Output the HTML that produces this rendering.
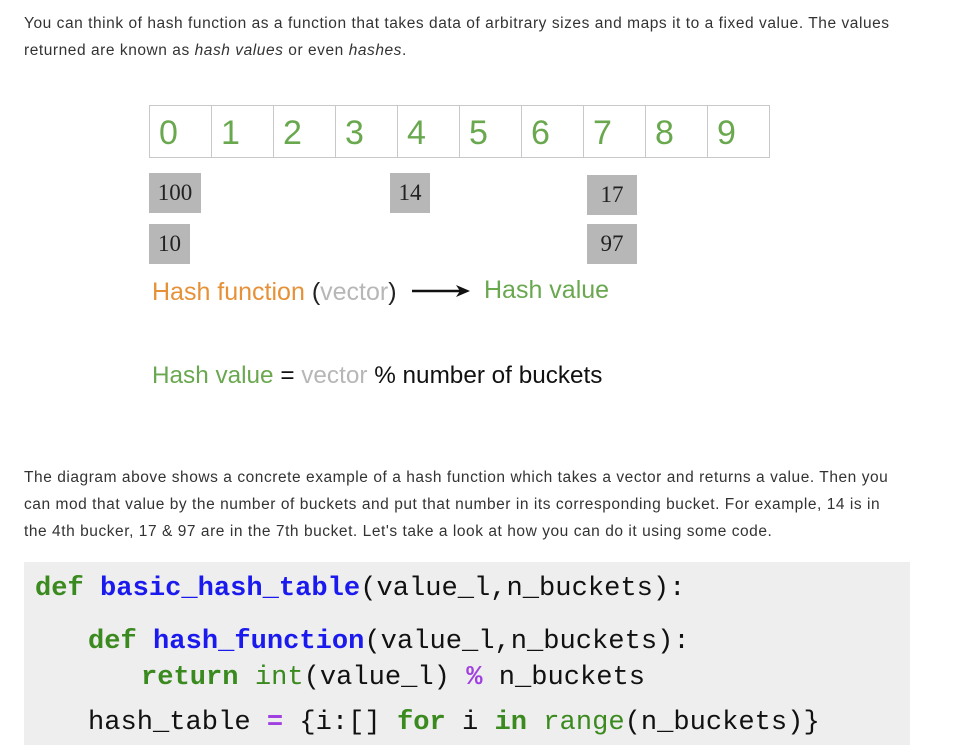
<!DOCTYPE html><html><head><style>
body{margin:0;width:973px;height:745px;overflow:hidden;background:#fff;font-family:"Liberation Sans",sans-serif;position:relative}
.p{position:absolute;left:24px;width:878px;font-size:15.5px;line-height:27px;color:#333;letter-spacing:0.55px}
.a{position:absolute;white-space:nowrap}
.cell{position:absolute;top:105px;width:62px;height:53px;border:1px solid #c8c8c8;border-right:none;color:#6aa84f;font-size:34px;line-height:54px;padding-left:9px;box-sizing:border-box;font-weight:300}
.box{position:absolute;background:#b7b7b7;font-family:"Liberation Serif",serif;font-size:23px;color:#222;height:40px;line-height:40px;text-align:center}
.g{color:#6aa84f}.gr{color:#b7b7b7}
.code{position:absolute;left:24px;top:562px;width:886px;height:183px;background:#eee;font-family:"Liberation Mono",monospace;font-size:27.1px;color:#111}
.code div{position:absolute;white-space:pre}
.k{color:#3b8a1f;font-weight:bold}.f{color:#1a1aee;font-weight:bold}.b{color:#3b8a1f}.o{color:#a040e0;font-weight:bold}
</style></head><body>
<div class="p" style="top:10px">You can think of hash function as a function that takes data of arbitrary sizes and maps it to a fixed value. The values returned are known as <i>hash values</i> or even <i>hashes</i>.</div>
<div class="cell" style="left:149px">0</div><div class="cell" style="left:211px">1</div><div class="cell" style="left:273px">2</div><div class="cell" style="left:335px">3</div><div class="cell" style="left:397px">4</div><div class="cell" style="left:459px">5</div><div class="cell" style="left:521px">6</div><div class="cell" style="left:583px">7</div><div class="cell" style="left:645px">8</div><div class="cell" style="left:707px;width:63px;border-right:1px solid #c8c8c8">9</div>
<div class="box" style="left:149px;top:173px;width:52px">100</div>
<div class="box" style="left:390px;top:173px;width:40px">14</div>
<div class="box" style="left:587px;top:175px;width:50px">17</div>
<div class="box" style="left:149px;top:224px;width:41px">10</div>
<div class="box" style="left:587px;top:224px;width:50px">97</div>
<div class="a" style="left:152px;top:278px;font-size:25px;color:#222"><span style="color:#e69138">Hash function</span> (<span class="gr">vector</span>)</div>
<svg class="a" style="left:410px;top:283px" width="62" height="16"><line x1="2" y1="8" x2="50" y2="8" stroke="#111" stroke-width="2.5"/><path d="M46 2 L60 8 L46 14 L50 8Z" fill="#111"/></svg>
<div class="a g" style="left:484px;top:276px;font-size:25px">Hash value</div>
<div class="a" style="left:152px;top:362px;font-size:24.3px;color:#111"><span class="g">Hash value</span> = <span class="gr">vector</span> % number of buckets</div>
<div class="p" style="top:464px">The diagram above shows a concrete example of a hash function which takes a vector and returns a value. Then you can mod that value by the number of buckets and put that number in its corresponding bucket. For example, 14 is in the 4th bucker, 17 &amp; 97 are in the 7th bucket. Let's take a look at how you can do it using some code.</div>
<div class="code">
<div style="left:11px;top:11px"><span class="k">def</span> <span class="f">basic_hash_table</span>(value_l,n_buckets):</div>
<div style="left:64px;top:64px"><span class="k">def</span> <span class="f">hash_function</span>(value_l,n_buckets):</div>
<div style="left:117px;top:100px"><span class="k">return</span> <span class="b">int</span>(value_l) <span class="o">%</span> n_buckets</div>
<div style="left:64px;top:145px">hash_table <span class="o">=</span> {i:[] <span class="k">for</span> i <span class="k">in</span> <span class="b">range</span>(n_buckets)}</div>
</div>
</body></html>
